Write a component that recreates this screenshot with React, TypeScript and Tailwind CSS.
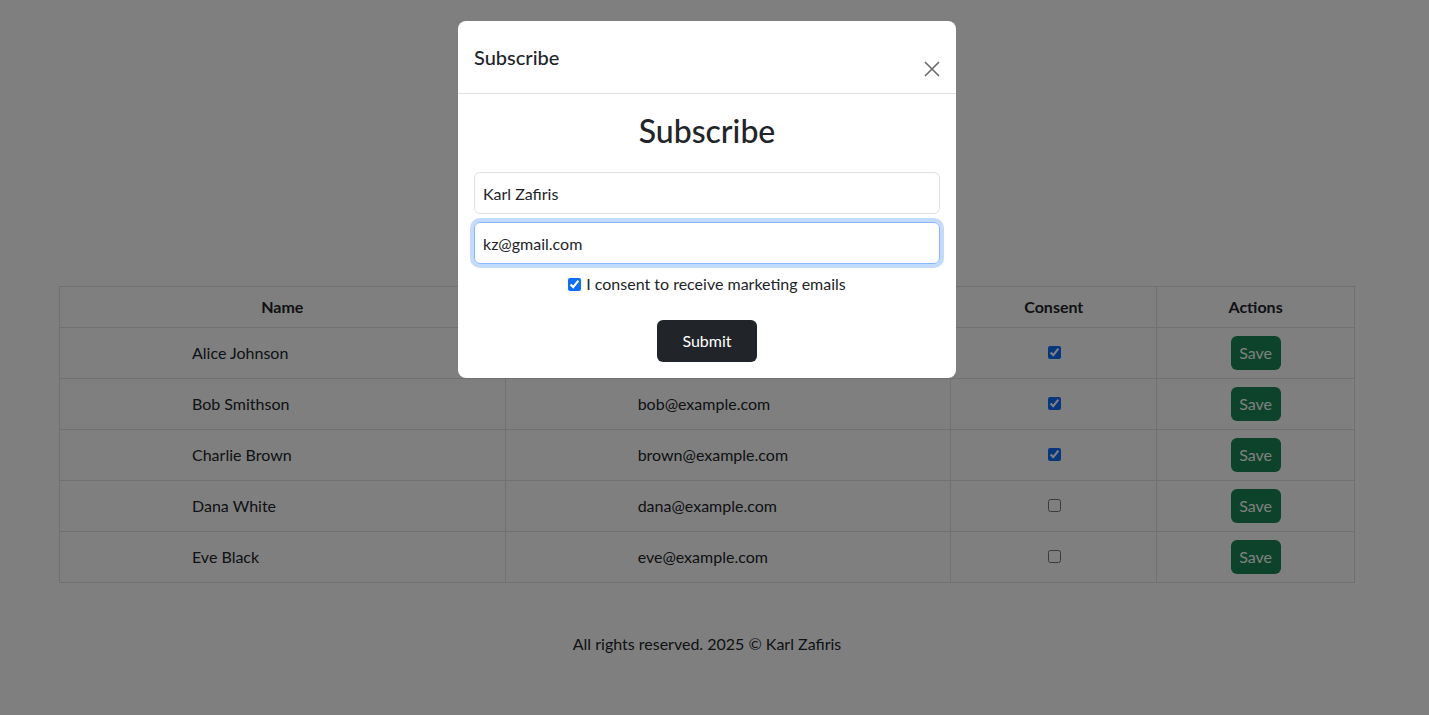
import { useState } from "react";

// --- data ---
interface Subscriber {
  id: number;
  name: string;
  email: string;
  consent: boolean;
}

const subscribers: Subscriber[] = [
  { id: 1, name: "Alice Johnson", email: "alice@example.com", consent: true },
  { id: 2, name: "Bob Smithson", email: "bob@example.com", consent: true },
  { id: 3, name: "Charlie Brown", email: "brown@example.com", consent: true },
  { id: 4, name: "Dana White", email: "dana@example.com", consent: false },
  { id: 5, name: "Eve Black", email: "eve@example.com", consent: false },
];

const font = "font-['Lato','Noto_Sans',sans-serif]";

export default function App() {
  const [name, setName] = useState("Karl Zafiris");
  const [email, setEmail] = useState("kz@gmail.com");
  const [agree, setAgree] = useState(true);

  return (
    <div className={`${font} relative min-h-[715px] bg-white text-[#212529] text-base pr-[15px]`}>
      {/* page content (behind the modal) */}
      <div className="mx-auto w-[1296px] pt-[286px]">
        <table className="w-full border-collapse border border-[#dee2e6]">
          <thead>
            <tr className="h-[41px]">
              <th className="w-[446px] border border-[#dee2e6] text-center font-bold">Name</th>
              <th className="w-[446px] border border-[#dee2e6] text-center font-bold">Email</th>
              <th className="w-[206px] border border-[#dee2e6] text-center font-bold">Consent</th>
              <th className="w-[198px] border border-[#dee2e6] text-center font-bold">Actions</th>
            </tr>
          </thead>
          <tbody>
            {subscribers.map((s) => (
              <tr key={s.id} className="h-[51px]">
                <td className="border border-[#dee2e6] pl-[132px] align-middle">{s.name}</td>
                <td className="border border-[#dee2e6] pl-[132px] align-middle">{s.email}</td>
                <td className="border border-[#dee2e6] align-middle">
                  <div className="flex items-center justify-center pl-[2px] pb-[1px]">
                    <input
                      type="checkbox"
                      defaultChecked={s.consent}
                      className="h-[13px] w-[13px] accent-[#0d6efd]"
                    />
                  </div>
                </td>
                <td className="border border-[#dee2e6] text-center align-middle">
                  <button className="h-[34px] w-[50px] rounded-md bg-[#198754] text-white">Save</button>
                </td>
              </tr>
            ))}
          </tbody>
        </table>

        <footer className="mt-[49px] text-center leading-6">All rights reserved. 2025 © Karl Zafiris</footer>
      </div>

      {/* backdrop */}
      <div className="fixed inset-0 bg-black/50" />

      {/* modal */}
      <div className="fixed inset-0 flex justify-center pr-[15px] pt-[21px]">
        <div className="h-fit w-[498px] rounded-lg bg-white">
          <div className="flex h-[73px] items-start justify-between border-b border-[#dee2e6] pl-4 pr-4">
            <h5 className="pt-[21px] text-xl leading-[30px] font-medium">Subscribe</h5>
            <button className="mt-[40px] flex h-4 w-4 items-center justify-center" aria-label="Close">
              <svg viewBox="0 0 16 16" className="h-4 w-4" fill="none" stroke="#6b6b6b" strokeWidth="1.6">
                <path d="M1 1L15 15M15 1L1 15" />
              </svg>
            </button>
          </div>

          <form className="flex flex-col px-4 pb-4 pt-[18px]" onSubmit={(e) => e.preventDefault()}>
            <h2 className="text-center text-[32px] leading-[38px] font-medium">Subscribe</h2>
            <input
              value={name}
              onChange={(e) => setName(e.target.value)}
              className="mt-[22px] h-[42px] rounded-md border border-[#dee2e6] px-2 outline-none"
            />
            <input
              value={email}
              onChange={(e) => setEmail(e.target.value)}
              className="mt-2 h-[42px] rounded-md border border-[#86b7fe] px-2 outline-none ring-4 ring-[#0d6efd]/25"
            />
            <label className="mt-2 flex items-center justify-center gap-[5px] leading-6">
              <input
                type="checkbox"
                checked={agree}
                onChange={(e) => setAgree(e.target.checked)}
                className="h-[13px] w-[13px] accent-[#0d6efd]"
              />
              I consent to receive marketing emails
            </label>
            <button type="submit" className="mx-auto mt-6 h-[42px] w-[100px] rounded-md bg-[#212529] text-white">
              Submit
            </button>
          </form>
        </div>
      </div>
    </div>
  );
}
